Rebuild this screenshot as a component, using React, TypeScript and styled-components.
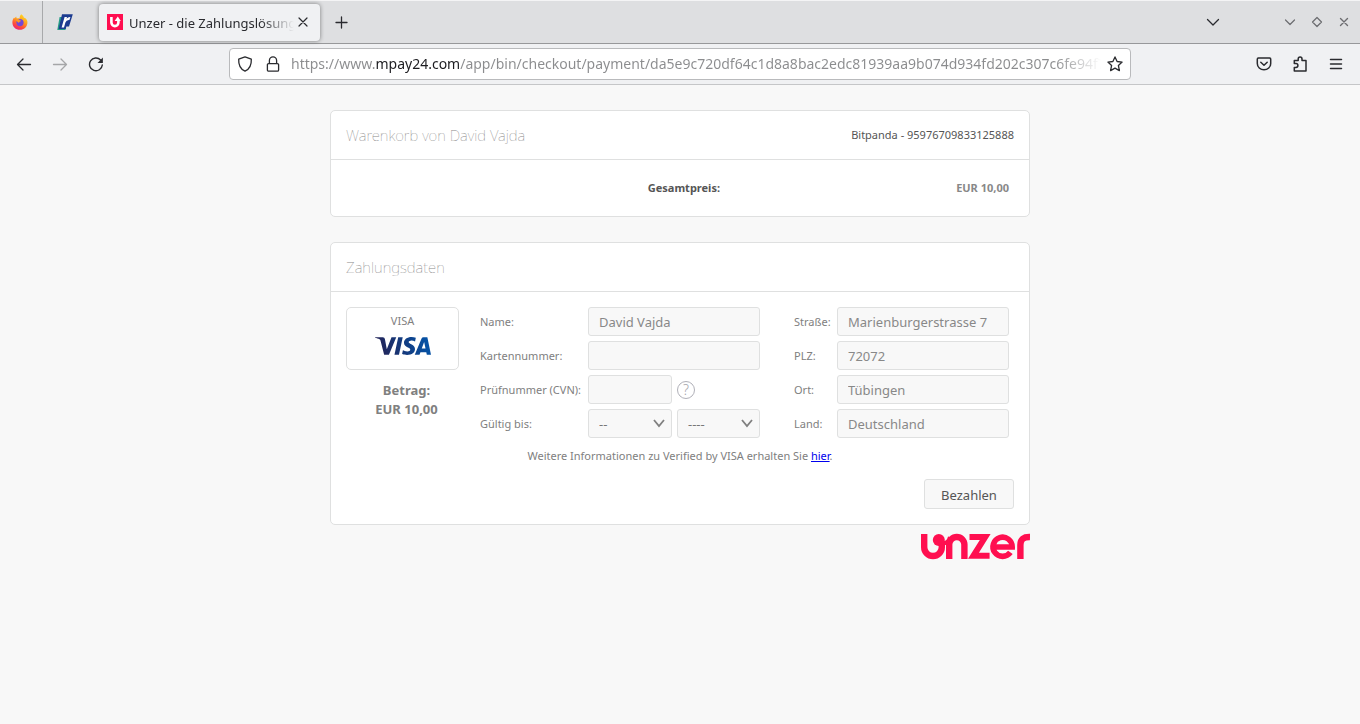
import React from "react";
import styled, { createGlobalStyle } from "styled-components";
import { SiVisa } from "react-icons/si";

const GlobalStyle = createGlobalStyle`
  * { box-sizing: border-box; }
  body {
    margin: 0;
    background: #f8f8f8;
    color: #808080;
    font-family: "Noto Sans", "Open Sans", sans-serif;
    font-size: 11px;
    line-height: 15px;
  }
  button, input, select { font-family: inherit; }
`;

/* ---------- browser chrome ---------- */

const TabStrip = styled.nav`
  display: flex;
  align-items: center;
  height: 44px;
  background: #dedfe1;
  border-top: 1px solid #f4f4f5;
  border-bottom: 1px solid #97989a;
`;

const PinnedTab = styled.button<{ $divided?: boolean }>`
  display: flex;
  align-items: center;
  justify-content: center;
  align-self: stretch;
  width: 43px;
  padding: ${(p) => (p.$divided ? "0 2px 0 0" : "0")};
  border: 0;
  border-right: ${(p) => (p.$divided ? "1px solid #a8a9ab" : "0")};
  background: none;
`;

const ActiveTab = styled.div`
  display: flex;
  align-items: center;
  gap: 6px;
  width: 221px;
  height: 37px;
  margin: 0 9px 0 13px;
  padding: 0 8px;
  border-radius: 4px;
  background: #f0f1f3;
  box-shadow: 0 0 4px rgba(0, 0, 0, 0.45);
`;

const TabTitle = styled.span`
  flex: 1;
  padding-top: 1px;
  overflow: hidden;
  white-space: nowrap;
  font-size: 13px;
  line-height: 20px;
  color: #2a2b2f;
  mask-image: linear-gradient(90deg, #000 80%, transparent);
`;

const IconButton = styled.button<{ $size?: number }>`
  display: flex;
  flex: none;
  align-items: center;
  justify-content: center;
  width: ${(p) => p.$size ?? 36}px;
  height: ${(p) => p.$size ?? 36}px;
  padding: 0;
  border: 0;
  background: none;
  color: #2a2b2f;

  &:disabled { color: #a5a6a8; }
`;

const CloseTab = styled(IconButton)`
  width: 10px;
  margin-left: -2px;
  margin-right: 4px;
`;

const WindowControls = styled.div`
  display: flex;
  align-items: center;
  margin-left: auto;
  padding-right: 3px;
`;

const WindowButton = styled(IconButton)`
  width: 27px;
  color: #6c6d70;
`;

const ListTabs = styled(IconButton)`
  margin-right: 45px;
`;

const Toolbar = styled.div`
  display: flex;
  align-items: center;
  height: 41px;
  padding: 0 6px;
  background: #f0f1f3;
  border-bottom: 1px solid #c5c6c8;
`;

const AddressBar = styled.div`
  display: flex;
  flex: 1;
  align-items: center;
  min-width: 0;
  height: 32px;
  margin: 0 115px;
  padding: 0 1px;
  border: 1px solid #b9babc;
  border-radius: 4px;
  background: #fff;
`;

/* The host part of the address is darker than the rest, and the end fades out. */
const AddressInput = styled.input`
  flex: 1;
  min-width: 0;
  height: 28px;
  margin-left: 4px;
  padding: 0 0 2px;
  border: 0;
  outline: 0;
  font-size: 14px;
  line-height: 20px;
  color: transparent;
  background: linear-gradient(90deg, #8b8c8e 85px, #1c1c20 85px, #1c1c20 169px, #8b8c8e 169px, #8b8c8e calc(100% - 45px), transparent);
  background-clip: text;
  -webkit-background-clip: text;
`;

/* ---------- checkout page ---------- */

const Page = styled.main`
  max-width: 700px;
  margin: 25px auto 0;
`;

const Card = styled.section`
  margin-bottom: 25px;
  border: 1px solid #dfe0e0;
  border-radius: 5px;
  background: #fff;

  &:last-of-type { margin-bottom: 8px; }
`;

const CardHeader = styled.header`
  display: flex;
  align-items: center;
  justify-content: space-between;
  height: 49px;
  padding: 0 15px;
  border-bottom: 1px solid #dfe0e0;
  color: #555;
`;

const Reference = styled.span`
  padding-bottom: 2px;
`;

const CardTitle = styled.h1`
  margin: 0;
  font-size: 15px;
  line-height: 20px;
  font-weight: 100;
  color: #888;
`;

const CardBody = styled.div`
  padding: 15px;
`;

const Totals = styled.table`
  width: 100%;
  border-spacing: 0;
  text-align: right;

  th, td { padding: 4px 5px 6px; height: 26px; font-weight: 700; }
  th { color: #555; }
  td { width: 289px; color: #888; }
`;

const PaymentForm = styled.form`
  display: flex;
  flex-direction: column;
`;

const Columns = styled.div`
  display: flex;
  align-items: flex-start;
  padding-right: 5px;
`;

const Summary = styled.div`
  width: 113px;
  margin-right: 21px;
  text-align: center;
`;

const CardBrand = styled.div`
  display: flex;
  flex-direction: column;
  align-items: center;
  height: 63px;
  margin-bottom: 11px;
  padding-top: 5px;
  border: 1px solid #dfe0e0;
  border-radius: 5px;
`;

const VisaMark = styled(SiVisa)`
  width: 56px;
  height: 36px;
  path { fill: url(#visaBlue); }
`;

const Amount = styled.strong`
  display: block;
  padding-left: 8px;
  font-size: 13px;
  line-height: 19px;
`;

const Fields = styled.div<{ $label: number }>`
  display: grid;
  grid-template-columns: ${(p) => p.$label}px 172px;
  grid-auto-rows: 29px;
  row-gap: 5px;
  align-items: center;

  & + & { margin-left: auto; }
`;

const Label = styled.label`
  white-space: nowrap;
`;

const TextField = styled.input`
  width: 100%;
  height: 29px;
  padding: 0 10px;
  border: 1px solid #dfe0e0;
  border-radius: 3px;
  background: #f8f8f8;
  color: #888;
  font-size: 13px;
`;

const Split = styled.div`
  display: grid;
  grid-template-columns: 84px 83px;
  gap: 5px;
  align-items: center;
`;

const SelectBox = styled.div`
  position: relative;

  svg {
    position: absolute;
    top: 10px;
    right: 7px;
    pointer-events: none;
  }
`;

const Select = styled.select`
  display: block;
  width: 100%;
  height: 29px;
  padding: 1px 10px 0;
  appearance: none;
  border: 1px solid #dfe0e0;
  border-radius: 3px;
  background: #f8f8f8;
  color: #777;
  font-size: 13px;
`;

const HelpButton = styled.button`
  width: 18px;
  height: 18px;
  padding: 0;
  border: 1px solid #b0b0b8;
  border-radius: 50%;
  background: #fff;
  color: #a5a5ac;
  font-size: 14px;
  line-height: 16px;
  font-weight: 300;
`;

const Notice = styled.p`
  margin: 10px 0 16px;
  text-align: center;

  a { color: #0000ee; }
`;

const PayButton = styled.button`
  align-self: flex-end;
  width: 90px;
  height: 30px;
  padding: 2px 0 0;
  border: 1px solid #dfe0e0;
  border-radius: 3px;
  background: #f8f8f8;
  color: #555;
  font-size: 13px;
`;

const Footer = styled.footer`
  display: flex;
  justify-content: flex-end;
`;

/* ---------- drawings ---------- */

const Firefox = () => (
  <svg width="16" height="16" viewBox="0 0 16 16" aria-hidden="true">
    <defs>
      <linearGradient id="fox" x1="0.8" y1="0" x2="0.3" y2="1">
        <stop offset="0" stopColor="#ffe226" />
        <stop offset="0.45" stopColor="#ff9a1f" />
        <stop offset="0.75" stopColor="#ff4a3a" />
        <stop offset="1" stopColor="#e8207c" />
      </linearGradient>
    </defs>
    <path d="M9.4 0.3C11 1.5 11.6 2.7 12 3.8C12.8 3.8 13 4.3 13.1 4.6L13.4 4C15 5.6 15.7 7.2 15.4 9.2C14.9 13 12 15.8 8 15.8C3.6 15.8 0.4 12.6 0.4 8.4C0.4 6.4 1 4.7 2.2 3.4L2.4 4.6L4.2 2.6C4.2 3.4 4.5 4 4.9 4.4C6 4.1 6.9 4.2 7.6 4.5C7.5 2.7 8.2 1.2 9.4 0.3Z" fill="url(#fox)" />
    <circle cx="8" cy="8.6" r="3.6" fill="#7447d6" />
    <path d="M3.8 5.6C5.4 4.6 6.8 5 7.6 6.3C8.6 6.3 9 6.7 8.8 7.3C8 7.7 7.2 8 6.9 8.8C5.6 8.3 4.6 7.3 3.8 5.6Z" fill="#ff9a1f" />
  </svg>
);

const SlantedFavicon = () => (
  <svg width="16" height="16" viewBox="0 0 16 16" aria-hidden="true">
    <path d="M2.6 3H6L4 14H9L8.4 16H0.3Z" fill="#259c86" />
    <path d="M5 0.3H15.8L12 12.6H9.4L8.6 15H1.6Z" fill="#1d3c90" />
    <path d="M4.6 13.4L7.6 3H10L9.5 4.8Q11 2.8 13.4 3L12.4 6Q9.4 5.6 8.4 8.6L7 13.4Z" fill="#fff" />
  </svg>
);

const UnzerFavicon = () => (
  <svg width="16" height="16" viewBox="0 0 16 16" aria-hidden="true">
    <rect width="16" height="16" fill="#ff0f50" />
    <path d="M4.4 3V8.6A3.5 3.5 0 0 0 11.4 8.6V5.8" fill="none" stroke="#fff" strokeWidth="2.6" />
    <path d="M7.6 7L10.8 2.6L13.8 7Z" fill="#fff" />
  </svg>
);

const Line = ({ d, size = 16, width = 1.3 }: { d: string; size?: number; width?: number }) => (
  <svg width={size} height={size} viewBox={`0 0 ${size} ${size}`} fill="none" stroke="currentColor" strokeWidth={width} strokeLinecap="round" strokeLinejoin="round" aria-hidden="true">
    <path d={d} />
  </svg>
);

const ReloadIcon = () => (
  <svg width="16" height="16" viewBox="0 0 16 16" fill="none" stroke="currentColor" strokeWidth="1.4" strokeLinecap="round" aria-hidden="true">
    <path d="M14.3 9A6.4 6.4 0 1 1 12.6 4" />
    <path d="M14.9 1.6V7H9.5Z" fill="currentColor" stroke="none" />
  </svg>
);

const SelectArrow = () => (
  <svg width="12" height="9" viewBox="0 0 12 9" fill="none" stroke="#808080" strokeWidth="1.8" aria-hidden="true">
    <path d="M1 1L6 7L11 1" />
  </svg>
);

const VisaGradient = () => (
  <svg width="0" height="0" aria-hidden="true">
    <defs>
      <linearGradient id="visaBlue" gradientUnits="userSpaceOnUse" x1="2" y1="15" x2="22" y2="9">
        <stop offset="0" stopColor="#222357" />
        <stop offset="1" stopColor="#0652a5" />
      </linearGradient>
    </defs>
  </svg>
);

const UnzerLogo = () => (
  <svg width="109" height="27" viewBox="0 0 109 27" role="img" aria-label="unzer">
    <g fill="none" stroke="#ff0f50" strokeWidth="6.4">
      <path d="M3.2 1V14.2A8.8 8.8 0 0 0 20.8 14.2V8" />
      <path d="M28.2 26V11.6A7.6 7.6 0 0 1 43.4 11.6V26" />
      <path d="M21 10.5C25 10.5 28 8.5 29 4" strokeWidth="4" />
      <path d="M48.5 4H64.2L52.4 22.8H68.6" strokeWidth="6" />
      <path d="M72.4 14H91.2A9.6 9.6 0 1 0 89.4 19.4" strokeWidth="5.6" />
      <path d="M99.4 26V12C99.4 6 102.6 3.8 109 4" />
    </g>
    <circle cx="17.8" cy="7" r="6" fill="#ff0f50" />
  </svg>
);

const address =
  "https://www.mpay24.com/app/bin/checkout/payment/da5e9c720df64c1d8a8bac2edc81939aa9b074d934fd202c307c6fe94f7";

const recipient = [
  { id: "street", label: "Straße:", value: "Marienburgerstrasse 7" },
  { id: "zip", label: "PLZ:", value: "72072" },
  { id: "city", label: "Ort:", value: "Tübingen" },
  { id: "country", label: "Land:", value: "Deutschland" },
];

export default function App() {
  return (
    <>
      <GlobalStyle />
      <TabStrip>
        <PinnedTab $divided aria-label="Firefox"><Firefox /></PinnedTab>
        <PinnedTab aria-label="Pinned tab"><SlantedFavicon /></PinnedTab>
        <ActiveTab>
          <UnzerFavicon />
          <TabTitle>Unzer - die Zahlungslösungen</TabTitle>
          <CloseTab $size={16} aria-label="Close tab"><Line size={10} width={1.2} d="M1 1L9 9M9 1L1 9" /></CloseTab>
        </ActiveTab>
        <IconButton $size={24} aria-label="New tab"><Line size={13} d="M6.5 1V12M1 6.5H12" /></IconButton>
        <WindowControls>
          <ListTabs aria-label="List all tabs"><Line size={14} d="M1.5 4.5L7 10L12.5 4.5" /></ListTabs>
          <WindowButton aria-label="Minimize"><Line size={12} width={1.2} d="M1.5 4L6 8.5L10.5 4" /></WindowButton>
          <WindowButton aria-label="Maximize"><Line size={12} width={1.2} d="M6 1.5L10.5 6L6 10.5L1.5 6Z" /></WindowButton>
          <WindowButton aria-label="Close"><Line size={10} width={1.4} d="M1.5 1.5L8.5 8.5M8.5 1.5L1.5 8.5" /></WindowButton>
        </WindowControls>
      </TabStrip>

      <Toolbar>
        <IconButton aria-label="Back"><Line d="M14.5 8.5H1.5M7 3L1.5 8.5L7 14" /></IconButton>
        <IconButton aria-label="Forward" disabled><Line d="M1.5 8.5H14.5M9 3L14.5 8.5L9 14" /></IconButton>
        <IconButton aria-label="Reload"><ReloadIcon /></IconButton>
        <AddressBar>
          <IconButton $size={28} aria-label="Tracking protection">
            <Line d="M8 0.9L14.3 3.2C14.6 8.5 12.6 13 8 15.2C3.4 13 1.4 8.5 1.7 3.2Z" />
          </IconButton>
          <IconButton $size={28} aria-label="Connection secure">
            <Line d="M3.6 7.6H12.4A1.2 1.2 0 0 1 13.6 8.8V13.9A1.2 1.2 0 0 1 12.4 15.1H3.6A1.2 1.2 0 0 1 2.4 13.9V8.8A1.2 1.2 0 0 1 3.6 7.6ZM4.4 7.4V4.4A3.6 3.6 0 0 1 11.6 4.4V7.4" />
          </IconButton>
          <AddressInput aria-label="Address" defaultValue={address} />
          <IconButton $size={28} aria-label="Bookmark">
            <Line d="M8 0.9L10.1 5.5L15.1 6.1L11.4 9.5L12.4 14.6L8 12.1L3.6 14.6L4.6 9.5L0.9 6.1L5.9 5.5Z" />
          </IconButton>
        </AddressBar>
        <IconButton aria-label="Pocket">
          <Line width={1.5} d="M2.4 2H13.6A1.2 1.2 0 0 1 14.7 3.2V7.4A6.7 6.4 0 0 1 1.3 7.4V3.2A1.2 1.2 0 0 1 2.4 2ZM4.8 6.2L8 9.3L11.2 6.2" />
        </IconButton>
        <IconButton aria-label="Extensions">
          <Line width={1.5} d="M2.3 15V11.4H4A1.8 1.8 0 0 0 4 7.6H2.3V4.6H6.2V3A1.8 1.8 0 0 1 10 3V4.6H14V15Z" />
        </IconButton>
        <IconButton aria-label="Menu"><Line size={14} width={1.5} d="M1.5 2.5H12.5M1.5 7H12.5M1.5 11.5H12.5" /></IconButton>
      </Toolbar>

      <Page>
        <Card>
          <CardHeader>
            <CardTitle>Warenkorb von David Vajda</CardTitle>
            <Reference>Bitpanda - 95976709833125888</Reference>
          </CardHeader>
          <CardBody>
            <Totals>
              <tbody>
                <tr>
                  <th scope="row">Gesamtpreis:</th>
                  <td>EUR 10,00</td>
                </tr>
              </tbody>
            </Totals>
          </CardBody>
        </Card>

        <Card>
          <CardHeader>
            <CardTitle as="h2">Zahlungsdaten</CardTitle>
          </CardHeader>
          <CardBody>
            <PaymentForm onSubmit={(e: React.FormEvent) => e.preventDefault()}>
              <Columns>
                <Summary>
                  <CardBrand>
                    <span>VISA</span>
                    <VisaMark aria-hidden="true" preserveAspectRatio="xMidYMid slice" />
                    <VisaGradient />
                  </CardBrand>
                  <Amount>Betrag:</Amount>
                  <Amount>EUR 10,00</Amount>
                </Summary>
                <Fields $label={108}>
                  <Label htmlFor="name">Name:</Label>
                  <TextField id="name" defaultValue="David Vajda" />
                  <Label htmlFor="number">Kartennummer:</Label>
                  <TextField id="number" />
                  <Label htmlFor="cvn">Prüfnummer (CVN):</Label>
                  <Split>
                    <TextField id="cvn" />
                    <HelpButton type="button" aria-label="Help">?</HelpButton>
                  </Split>
                  <Label htmlFor="month">Gültig bis:</Label>
                  <Split>
                    <SelectBox>
                      <Select id="month"><option>--</option></Select>
                      <SelectArrow />
                    </SelectBox>
                    <SelectBox>
                      <Select aria-label="Jahr"><option>----</option></Select>
                      <SelectArrow />
                    </SelectBox>
                  </Split>
                </Fields>
                <Fields $label={43}>
                  {recipient.map((f) => (
                    <React.Fragment key={f.id}>
                      <Label htmlFor={f.id}>{f.label}</Label>
                      <TextField id={f.id} defaultValue={f.value} />
                    </React.Fragment>
                  ))}
                </Fields>
              </Columns>
              <Notice>
                Weitere Informationen zu Verified by VISA erhalten Sie <a href="#hier">hier</a>.
              </Notice>
              <PayButton>Bezahlen</PayButton>
            </PaymentForm>
          </CardBody>
        </Card>
        <Footer><UnzerLogo /></Footer>
      </Page>
    </>
  );
}
